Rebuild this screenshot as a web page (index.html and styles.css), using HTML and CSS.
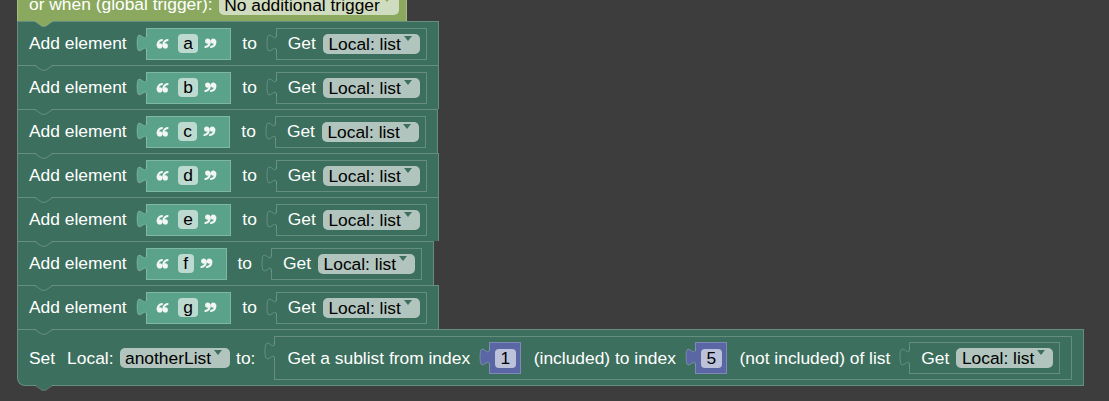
FILE: index.html
```html
<!DOCTYPE html>
<html lang="en">
<head>
<meta charset="UTF-8">
<meta name="viewport" content="width=device-width, initial-scale=1">
<title>Blocks</title>
<link rel="stylesheet" href="styles.css">
</head>
<body>

<div id=ws>
<div class=stack>

	<!-- trigger block, its top is scrolled out of view -->
	<div class="blk trig">
		<div class=row>
			<span class=lbl>or when (global trigger):</span>
			<span class=dd>No additional trigger</span>
		</div>
	</div>

	<div class="blk stmt">
		<svg class="notch ol" width=18 height=7 viewBox="0 0 18 7"><path class=f d="M0,0H17.6L10.6,5.25H7Z"/><path class=s d="M0,0.5L7,5.25H10.6L17.6,0.5"/></svg>
		<span class=lbl>Add element</span>
		<div class="val quote">
			<svg class=tab width=11 height=24 viewBox="0 0 11 24"><path class=f d="M11,5H10.5c0,12 -9.5,-9.5 -9.5,9s9.5,-3 9.5,9H11Z"/><path class=s d="M10.5,5c0,12 -9.5,-9.5 -9.5,9s9.5,-3 9.5,9"/></svg>
			<svg class="qt ql" width=12 height=10 viewBox="0 0 12 10"><circle cx=2.7 cy=6.9 r=2.6 /><path d="M0.6,6.6Q0.6,2 5,1"/><circle cx=8.3 cy=6.9 r=2.6 /><path d="M6.2,6.6Q6.2,2 10.6,1"/></svg>
			<span class=fld>a</span>
			<svg class="qt qr" width=12 height=10 viewBox="0 0 12 10"><circle cx=3.7 cy=3.1 r=2.6 /><path d="M5.8,3.4Q5.8,8 1.4,9"/><circle cx=9.3 cy=3.1 r=2.6 /><path d="M11.4,3.4Q11.4,8 7,9"/></svg>
		</div>
		<span class=lbl>to</span>
		<div class="val get">
			<svg class=tab width=11 height=24 viewBox="0 0 11 24"><path class=f d="M11,5H10.5c0,12 -9.5,-9.5 -9.5,9s9.5,-3 9.5,9H11Z"/><path class=s d="M10.5,5c0,12 -9.5,-9.5 -9.5,9s9.5,-3 9.5,9"/></svg>
			<span class=lbl>Get</span>
			<span class=dd>Local: list</span>
		</div>
	</div>

	<div class="blk stmt">
		<svg class=notch width=18 height=7 viewBox="0 0 18 7"><path class=f d="M0,0H17.6L10.6,5.25H7Z"/><path class=s d="M0,0.5L7,5.25H10.6L17.6,0.5"/></svg>
		<span class=lbl>Add element</span>
		<div class="val quote">
			<svg class=tab width=11 height=24 viewBox="0 0 11 24"><path class=f d="M11,5H10.5c0,12 -9.5,-9.5 -9.5,9s9.5,-3 9.5,9H11Z"/><path class=s d="M10.5,5c0,12 -9.5,-9.5 -9.5,9s9.5,-3 9.5,9"/></svg>
			<svg class="qt ql" width=12 height=10 viewBox="0 0 12 10"><circle cx=2.7 cy=6.9 r=2.6 /><path d="M0.6,6.6Q0.6,2 5,1"/><circle cx=8.3 cy=6.9 r=2.6 /><path d="M6.2,6.6Q6.2,2 10.6,1"/></svg>
			<span class=fld>b</span>
			<svg class="qt qr" width=12 height=10 viewBox="0 0 12 10"><circle cx=3.7 cy=3.1 r=2.6 /><path d="M5.8,3.4Q5.8,8 1.4,9"/><circle cx=9.3 cy=3.1 r=2.6 /><path d="M11.4,3.4Q11.4,8 7,9"/></svg>
		</div>
		<span class=lbl>to</span>
		<div class="val get">
			<svg class=tab width=11 height=24 viewBox="0 0 11 24"><path class=f d="M11,5H10.5c0,12 -9.5,-9.5 -9.5,9s9.5,-3 9.5,9H11Z"/><path class=s d="M10.5,5c0,12 -9.5,-9.5 -9.5,9s9.5,-3 9.5,9"/></svg>
			<span class=lbl>Get</span>
			<span class=dd>Local: list</span>
		</div>
	</div>

	<div class="blk stmt">
		<svg class=notch width=18 height=7 viewBox="0 0 18 7"><path class=f d="M0,0H17.6L10.6,5.25H7Z"/><path class=s d="M0,0.5L7,5.25H10.6L17.6,0.5"/></svg>
		<span class=lbl>Add element</span>
		<div class="val quote">
			<svg class=tab width=11 height=24 viewBox="0 0 11 24"><path class=f d="M11,5H10.5c0,12 -9.5,-9.5 -9.5,9s9.5,-3 9.5,9H11Z"/><path class=s d="M10.5,5c0,12 -9.5,-9.5 -9.5,9s9.5,-3 9.5,9"/></svg>
			<svg class="qt ql" width=12 height=10 viewBox="0 0 12 10"><circle cx=2.7 cy=6.9 r=2.6 /><path d="M0.6,6.6Q0.6,2 5,1"/><circle cx=8.3 cy=6.9 r=2.6 /><path d="M6.2,6.6Q6.2,2 10.6,1"/></svg>
			<span class=fld>c</span>
			<svg class="qt qr" width=12 height=10 viewBox="0 0 12 10"><circle cx=3.7 cy=3.1 r=2.6 /><path d="M5.8,3.4Q5.8,8 1.4,9"/><circle cx=9.3 cy=3.1 r=2.6 /><path d="M11.4,3.4Q11.4,8 7,9"/></svg>
		</div>
		<span class=lbl>to</span>
		<div class="val get">
			<svg class=tab width=11 height=24 viewBox="0 0 11 24"><path class=f d="M11,5H10.5c0,12 -9.5,-9.5 -9.5,9s9.5,-3 9.5,9H11Z"/><path class=s d="M10.5,5c0,12 -9.5,-9.5 -9.5,9s9.5,-3 9.5,9"/></svg>
			<span class=lbl>Get</span>
			<span class=dd>Local: list</span>
		</div>
	</div>

	<div class="blk stmt">
		<svg class=notch width=18 height=7 viewBox="0 0 18 7"><path class=f d="M0,0H17.6L10.6,5.25H7Z"/><path class=s d="M0,0.5L7,5.25H10.6L17.6,0.5"/></svg>
		<span class=lbl>Add element</span>
		<div class="val quote">
			<svg class=tab width=11 height=24 viewBox="0 0 11 24"><path class=f d="M11,5H10.5c0,12 -9.5,-9.5 -9.5,9s9.5,-3 9.5,9H11Z"/><path class=s d="M10.5,5c0,12 -9.5,-9.5 -9.5,9s9.5,-3 9.5,9"/></svg>
			<svg class="qt ql" width=12 height=10 viewBox="0 0 12 10"><circle cx=2.7 cy=6.9 r=2.6 /><path d="M0.6,6.6Q0.6,2 5,1"/><circle cx=8.3 cy=6.9 r=2.6 /><path d="M6.2,6.6Q6.2,2 10.6,1"/></svg>
			<span class=fld>d</span>
			<svg class="qt qr" width=12 height=10 viewBox="0 0 12 10"><circle cx=3.7 cy=3.1 r=2.6 /><path d="M5.8,3.4Q5.8,8 1.4,9"/><circle cx=9.3 cy=3.1 r=2.6 /><path d="M11.4,3.4Q11.4,8 7,9"/></svg>
		</div>
		<span class=lbl>to</span>
		<div class="val get">
			<svg class=tab width=11 height=24 viewBox="0 0 11 24"><path class=f d="M11,5H10.5c0,12 -9.5,-9.5 -9.5,9s9.5,-3 9.5,9H11Z"/><path class=s d="M10.5,5c0,12 -9.5,-9.5 -9.5,9s9.5,-3 9.5,9"/></svg>
			<span class=lbl>Get</span>
			<span class=dd>Local: list</span>
		</div>
	</div>

	<div class="blk stmt">
		<svg class=notch width=18 height=7 viewBox="0 0 18 7"><path class=f d="M0,0H17.6L10.6,5.25H7Z"/><path class=s d="M0,0.5L7,5.25H10.6L17.6,0.5"/></svg>
		<span class=lbl>Add element</span>
		<div class="val quote">
			<svg class=tab width=11 height=24 viewBox="0 0 11 24"><path class=f d="M11,5H10.5c0,12 -9.5,-9.5 -9.5,9s9.5,-3 9.5,9H11Z"/><path class=s d="M10.5,5c0,12 -9.5,-9.5 -9.5,9s9.5,-3 9.5,9"/></svg>
			<svg class="qt ql" width=12 height=10 viewBox="0 0 12 10"><circle cx=2.7 cy=6.9 r=2.6 /><path d="M0.6,6.6Q0.6,2 5,1"/><circle cx=8.3 cy=6.9 r=2.6 /><path d="M6.2,6.6Q6.2,2 10.6,1"/></svg>
			<span class=fld>e</span>
			<svg class="qt qr" width=12 height=10 viewBox="0 0 12 10"><circle cx=3.7 cy=3.1 r=2.6 /><path d="M5.8,3.4Q5.8,8 1.4,9"/><circle cx=9.3 cy=3.1 r=2.6 /><path d="M11.4,3.4Q11.4,8 7,9"/></svg>
		</div>
		<span class=lbl>to</span>
		<div class="val get">
			<svg class=tab width=11 height=24 viewBox="0 0 11 24"><path class=f d="M11,5H10.5c0,12 -9.5,-9.5 -9.5,9s9.5,-3 9.5,9H11Z"/><path class=s d="M10.5,5c0,12 -9.5,-9.5 -9.5,9s9.5,-3 9.5,9"/></svg>
			<span class=lbl>Get</span>
			<span class=dd>Local: list</span>
		</div>
	</div>

	<div class="blk stmt">
		<svg class=notch width=18 height=7 viewBox="0 0 18 7"><path class=f d="M0,0H17.6L10.6,5.25H7Z"/><path class=s d="M0,0.5L7,5.25H10.6L17.6,0.5"/></svg>
		<span class=lbl>Add element</span>
		<div class="val quote">
			<svg class=tab width=11 height=24 viewBox="0 0 11 24"><path class=f d="M11,5H10.5c0,12 -9.5,-9.5 -9.5,9s9.5,-3 9.5,9H11Z"/><path class=s d="M10.5,5c0,12 -9.5,-9.5 -9.5,9s9.5,-3 9.5,9"/></svg>
			<svg class="qt ql" width=12 height=10 viewBox="0 0 12 10"><circle cx=2.7 cy=6.9 r=2.6 /><path d="M0.6,6.6Q0.6,2 5,1"/><circle cx=8.3 cy=6.9 r=2.6 /><path d="M6.2,6.6Q6.2,2 10.6,1"/></svg>
			<span class=fld>f</span>
			<svg class="qt qr" width=12 height=10 viewBox="0 0 12 10"><circle cx=3.7 cy=3.1 r=2.6 /><path d="M5.8,3.4Q5.8,8 1.4,9"/><circle cx=9.3 cy=3.1 r=2.6 /><path d="M11.4,3.4Q11.4,8 7,9"/></svg>
		</div>
		<span class=lbl>to</span>
		<div class="val get">
			<svg class=tab width=11 height=24 viewBox="0 0 11 24"><path class=f d="M11,5H10.5c0,12 -9.5,-9.5 -9.5,9s9.5,-3 9.5,9H11Z"/><path class=s d="M10.5,5c0,12 -9.5,-9.5 -9.5,9s9.5,-3 9.5,9"/></svg>
			<span class=lbl>Get</span>
			<span class=dd>Local: list</span>
		</div>
	</div>

	<div class="blk stmt">
		<svg class=notch width=18 height=7 viewBox="0 0 18 7"><path class=f d="M0,0H17.6L10.6,5.25H7Z"/><path class=s d="M0,0.5L7,5.25H10.6L17.6,0.5"/></svg>
		<span class=lbl>Add element</span>
		<div class="val quote">
			<svg class=tab width=11 height=24 viewBox="0 0 11 24"><path class=f d="M11,5H10.5c0,12 -9.5,-9.5 -9.5,9s9.5,-3 9.5,9H11Z"/><path class=s d="M10.5,5c0,12 -9.5,-9.5 -9.5,9s9.5,-3 9.5,9"/></svg>
			<svg class="qt ql" width=12 height=10 viewBox="0 0 12 10"><circle cx=2.7 cy=6.9 r=2.6 /><path d="M0.6,6.6Q0.6,2 5,1"/><circle cx=8.3 cy=6.9 r=2.6 /><path d="M6.2,6.6Q6.2,2 10.6,1"/></svg>
			<span class=fld>g</span>
			<svg class="qt qr" width=12 height=10 viewBox="0 0 12 10"><circle cx=3.7 cy=3.1 r=2.6 /><path d="M5.8,3.4Q5.8,8 1.4,9"/><circle cx=9.3 cy=3.1 r=2.6 /><path d="M11.4,3.4Q11.4,8 7,9"/></svg>
		</div>
		<span class=lbl>to</span>
		<div class="val get">
			<svg class=tab width=11 height=24 viewBox="0 0 11 24"><path class=f d="M11,5H10.5c0,12 -9.5,-9.5 -9.5,9s9.5,-3 9.5,9H11Z"/><path class=s d="M10.5,5c0,12 -9.5,-9.5 -9.5,9s9.5,-3 9.5,9"/></svg>
			<span class=lbl>Get</span>
			<span class=dd>Local: list</span>
		</div>
	</div>

	<div class="blk stmt set">
		<svg class=notch width=18 height=7 viewBox="0 0 18 7"><path class=f d="M0,0H17.6L10.6,5.25H7Z"/><path class=s d="M0,0.5L7,5.25H10.6L17.6,0.5"/></svg>
		<span class=lbl>Set</span>
		<span class=lbl>Local:</span>
		<span class=dd>anotherList</span>
		<span class=lbl>to:</span>
		<div class="val sub">
			<svg class=tab width=11 height=24 viewBox="0 0 11 24"><path class=f d="M11,5H10.5c0,12 -9.5,-9.5 -9.5,9s9.5,-3 9.5,9H11Z"/><path class=s d="M10.5,5c0,12 -9.5,-9.5 -9.5,9s9.5,-3 9.5,9"/></svg>
			<span class=lbl>Get a sublist from index</span>
			<div class="val num">
				<svg class=tab width=11 height=24 viewBox="0 0 11 24"><path class=f d="M11,5H10.5c0,12 -9.5,-9.5 -9.5,9s9.5,-3 9.5,9H11Z"/><path class=s d="M10.5,5c0,12 -9.5,-9.5 -9.5,9s9.5,-3 9.5,9"/></svg>
				<span class=fld>1</span>
			</div>
			<span class=lbl>(included) to index</span>
			<div class="val num">
				<svg class=tab width=11 height=24 viewBox="0 0 11 24"><path class=f d="M11,5H10.5c0,12 -9.5,-9.5 -9.5,9s9.5,-3 9.5,9H11Z"/><path class=s d="M10.5,5c0,12 -9.5,-9.5 -9.5,9s9.5,-3 9.5,9"/></svg>
				<span class=fld>5</span>
			</div>
			<span class=lbl>(not included) of list</span>
			<div class="val get">
				<svg class=tab width=11 height=24 viewBox="0 0 11 24"><path class=f d="M11,5H10.5c0,12 -9.5,-9.5 -9.5,9s9.5,-3 9.5,9H11Z"/><path class=s d="M10.5,5c0,12 -9.5,-9.5 -9.5,9s9.5,-3 9.5,9"/></svg>
				<span class=lbl>Get</span>
				<span class=dd>Local: list</span>
			</div>
		</div>
		<svg class=btab width=18 height=7 viewBox="0 0 18 7"><path class=f d="M0,0H17.6L10.6,5.25H7Z"/><path class=s d="M0,0.5L7,5.25H10.6L17.6,0.5"/></svg>
	</div>

</div>
</div>

</body>
</html>
```

FILE: styles.css
```css
*,
*::before,
*::after {
	margin: 0;
	padding: 0;
	box-sizing: border-box;
}
HTML, BODY {
	width: 100%;
	height: 100%;
}
BODY {
	background-color: #3d3d3d;
	color: #fff;
	font-family: "Liberation Sans", Arial, sans-serif;
	font-size: 17.4px;
	overflow: hidden;
	--ln: rgba(255, 255, 255, 0.22);
	--green: #3c6f5d;
	--olive: #8aa95f;
}

#ws {
	padding-left: 17px;
}
.stack {
	display: flex;
	flex-direction: column;
	align-items: flex-start;
}

/* statement blocks */
.blk {
	--c: var(--green);
	position: relative;
	display: flex;
	align-items: center;
	background: var(--c);
	border: 1px solid var(--ln);
	white-space: nowrap;
}
.trig {
	--c: var(--olive);
	height: 21px;
	overflow: hidden;
	align-items: flex-start;
	border-width: 0 1px;
	padding: 0 7px 0 11px;
}
.trig .row {
	display: flex;
	align-items: center;
	height: 43px;
	margin-top: -17px;
}
.stmt {
	height: 44px;
	border-width: 1px 1px 0 1px;
	padding: 0 11px;
}
.set {
	height: auto;
	border-width: 1px;
	padding: 6px 11px 5px 11px;
	border-bottom-left-radius: 8px;
}

/* notch on top, tab below */
.notch, .btab {
	position: absolute;
	left: 17px;
	overflow: visible;
}
.notch { top: -1px; }
.btab { top: 100%; }
.notch .f, .btab .f { fill: var(--green); }
.notch.ol .f { fill: var(--olive); }
.notch .s, .btab .s, .tab .s {
	fill: none;
	stroke: var(--ln);
	stroke-width: 1;
}

/* value blocks */
.val {
	position: relative;
	display: flex;
	align-items: center;
	height: 32px;
	margin-left: 19px;
	background: var(--c);
	border: 1px solid var(--ln);
}
.tab {
	position: absolute;
	left: -11px;
	top: 0;
	overflow: visible;
}
.tab .f { fill: var(--c); }

.quote {
	--c: #5aa38a;
	padding: 0 14px 0 10px;
}
.num {
	--c: #5b67a5;
	padding: 0 4px 0 5px;
}
.get {
	padding: 0 6px 0 11px;
}
.sub {
	height: 44px;
	padding: 0 11px 0 12px;
}

.qt { display: block; overflow: visible; }
.qt circle { fill: #f2f7f4; }
.qt path { fill: none; stroke: #f2f7f4; stroke-width: 2.1; stroke-linecap: round; }
.ql { margin-right: 9px; margin-top: 1px; }
.qr { margin-left: 6px; margin-top: -1px; }

/* labels and fields */
.lbl { white-space: pre; }
.val + .lbl { margin-left: 11px; }
.num + .lbl { margin-left: 13px; }
.lbl + .lbl { margin-left: 12px; }
.lbl + .dd { margin-left: 6px; }
.get .lbl + .dd { margin-left: 7px; }
.dd + .lbl { margin-left: 6px; }

.fld {
	height: 19px;
	line-height: 19px;
	padding: 0 5.5px;
	border-radius: 4px;
	background: rgba(255, 255, 255, 0.6);
	color: #000;
}
.dd {
	display: flex;
	height: 20px;
	line-height: 20px;
	padding: 0 8px 0 5.5px;
	border-radius: 5px;
	background: rgba(255, 255, 255, 0.6);
	color: #000;
}
.dd::after {
	content: '';
	align-self: flex-start;
	margin: 2px 0 0 3px;
	border-style: solid;
	border-width: 5.5px 4.5px 0 4.5px;
	border-color: var(--c) transparent transparent transparent;
}
```
